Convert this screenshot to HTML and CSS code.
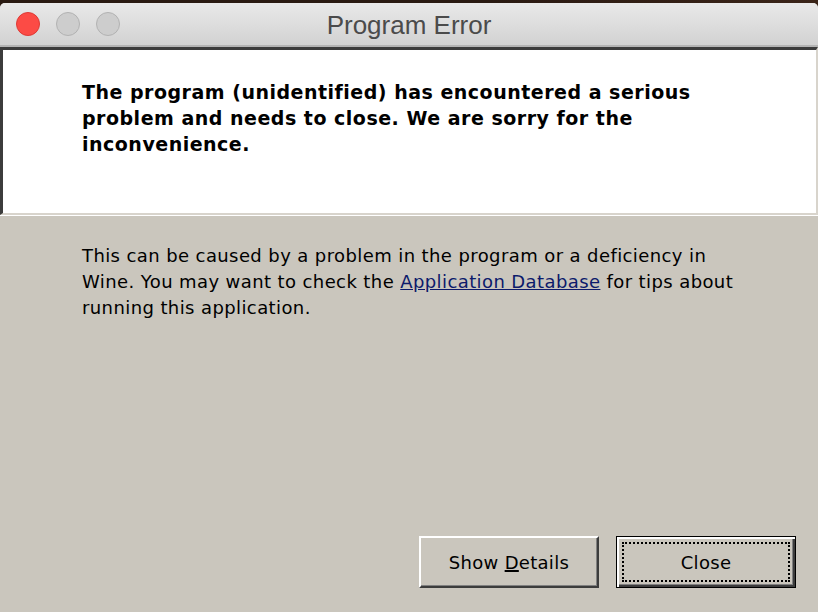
FILE: index.html
```html
<!DOCTYPE html>
<html>
<head>
    <meta charset="utf-8">
    <title>Program Error</title>
    <link rel="stylesheet" href="styles.css">
</head>
<body>
    <div class="window">
        <div class="titlebar">
            <div class="lights">
                <span class="light light-close"></span>
                <span class="light"></span>
                <span class="light"></span>
            </div>
            <div class="title">Program Error</div>
        </div>

        <div class="message-panel">
            <p class="message">The program (unidentified) has encountered a serious problem and needs to close. We are sorry for the inconvenience.</p>
        </div>

        <div class="dialog-body">
            <p class="info">This can be caused by a problem in the program or a deficiency in Wine. You may want to check the <a href="#" class="link">Application Database</a> for tips about running this application.</p>

            <div class="buttons">
                <button class="btn">Show <u>D</u>etails</button>
                <button class="btn btn-default"><span class="focus">Close</span></button>
            </div>
        </div>
    </div>
</body>
</html>
```

FILE: styles.css
```css
html, body {
    margin: 0;
    padding: 0;
    height: 612px;
    overflow: hidden;
}

body {
    background: linear-gradient(90deg, #2a1a12 0%, #2a1a12 60%, #3a2418 100%);
    font-family: "DejaVu Sans", sans-serif;
    color: #000;
}

.window {
    margin-top: 3px;
    height: 609px;
    display: flex;
    flex-direction: column;
    background: #cac6bd;
    border-radius: 5px 5px 0 0;
    overflow: hidden;
}

.titlebar {
    height: 42px;
    flex: none;
    display: flex;
    align-items: center;
    position: relative;
    background: linear-gradient(#e9e9e9, #d2d2d2);
    border-bottom: 2px solid #b4b4b4;
}

.lights {
    display: flex;
    gap: 16px;
    padding-left: 16px;
}

.light {
    width: 22px;
    height: 22px;
    border-radius: 50%;
    background: #cdcdcd;
    border: 1px solid #b2b2b2;
}

.light-close {
    background: #fc4b45;
    border-color: #de3a35;
}

.title {
    position: absolute;
    left: 0;
    right: 0;
    top: 0;
    bottom: 0;
    display: flex;
    align-items: center;
    justify-content: center;
    font-family: "Liberation Sans", Arial, sans-serif;
    font-size: 26px;
    color: #4b4b4b;
    padding-top: 2px;
}

.message-panel {
    flex: none;
    height: 168px;
    box-sizing: border-box;
    background: #fff;
    border-top: 3px solid #3c3c3c;
    border-left: 3px solid #3c3c3c;
    border-right: 2px solid #d8d4cc;
    border-bottom: 2px solid #d8d4cc;
    box-shadow: 0 1px 0 #fff;
    padding: 29px 0 0 79px;
}

.message {
    margin: 0;
    max-width: 660px;
    font-size: 19px;
    font-weight: bold;
    letter-spacing: 0.5px;
    line-height: 26px;
}

.dialog-body {
    flex: 1;
    display: flex;
    flex-direction: column;
    padding: 28px 22px 24px 82px;
}

.info {
    margin: 0;
    max-width: 676px;
    font-size: 18px;
    letter-spacing: 0.4px;
    line-height: 26px;
}

.link {
    color: #0c1a6b;
    text-decoration: underline;
}

.buttons {
    margin-top: auto;
    display: flex;
    justify-content: flex-end;
    gap: 17px;
}

.btn {
    width: 180px;
    height: 52px;
    box-sizing: border-box;
    background: #cac6bd;
    font-family: "DejaVu Sans", sans-serif;
    font-size: 18px;
    letter-spacing: 0.3px;
    color: #000;
    border: 2px solid;
    border-color: #fff #3c3c3c #3c3c3c #fff;
    box-shadow: inset -1px -1px 0 #808080;
    padding: 0;
    margin: 0;
}

.btn u {
    text-decoration-thickness: 2px;
}

.btn-default {
    border: 1px solid #000;
    box-shadow: inset 2px 2px 0 #fff, inset -2px -2px 0 #3c3c3c, inset -3px -3px 0 #808080;
    padding: 5px;
    display: flex;
}

.focus {
    flex: 1;
    display: flex;
    align-items: center;
    justify-content: center;
    border: 2px dotted #000;
}
```
